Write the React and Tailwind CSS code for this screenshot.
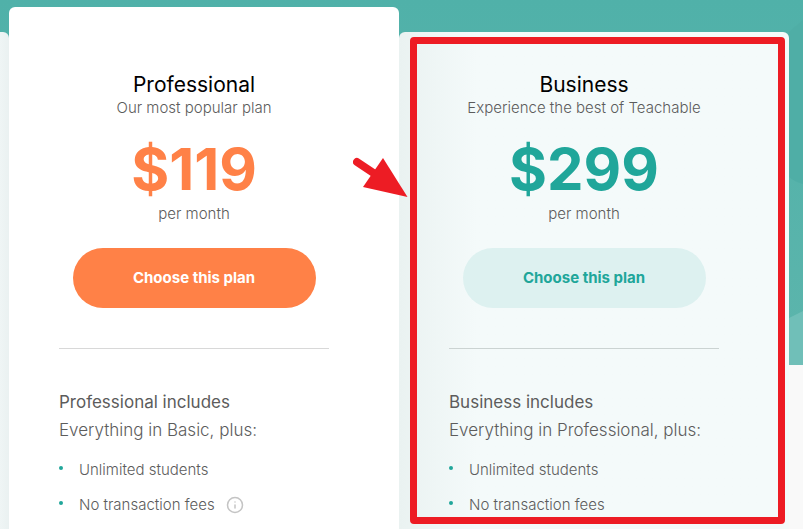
import { Info } from 'lucide-react';

const plans = [
  {
    name: 'Professional',
    tagline: 'Our most popular plan',
    price: '$119',
    heading: 'Professional includes',
    subheading: 'Everything in Basic, plus:',
    features: [
      { label: 'Unlimited students' },
      { label: 'No transaction fees', info: true }
    ],
    card: 'mt-[7px] pt-[66px] bg-white',
    priceColor: 'text-[#ff8147]',
    button: 'bg-[#ff8147] text-white',
    divider: 'border-[#d8d8d8]'
  },
  {
    name: 'Business',
    tagline: 'Experience the best of Teachable',
    price: '$299',
    heading: 'Business includes',
    subheading: 'Everything in Professional, plus:',
    features: [
      { label: 'Unlimited students' },
      { label: 'No transaction fees' }
    ],
    card: 'mt-[32px] pt-[41px] bg-[#f4fafa] bg-linear-to-r from-[#eaf2f1] to-[#f4fafa] to-20%',
    priceColor: 'text-[#20a69a]',
    button: 'bg-[#ddf1f0] text-[#20a69a]',
    divider: 'border-[#cbd3d2]',
    highlighted: true
  }
];

const HeroBackground = () => (
  <div className="absolute inset-x-0 top-0 h-[365px] overflow-hidden bg-linear-to-b from-[#50b1a9] to-[#5cb5ac]">
    <svg className="absolute right-0 top-0 h-full w-[14px]" viewBox="0 0 14 365" aria-hidden="true">
      <path d="M0 32L14 20V184Q6 182 0 177Z" fill="#4faea6" />
      <path d="M0 318L14 311V365H0Z" fill="#70bfb8" />
    </svg>
  </div>
);

const Arrow = () => (
  <svg
    className="absolute -left-[46px] top-[125px] h-[41px] w-[56px]"
    viewBox="0 0 56 41"
    fill="#ed1c24"
    aria-hidden="true"
  >
    <path d="M4 5L25 19" stroke="#ed1c24" strokeWidth="8" strokeLinecap="round" />
    <path d="M30 1L54.500 40L10 30Z" />
  </svg>
);

const PlanCard = ({ plan }) => (
  <section className={`relative rounded-t-md pl-[50px] pr-[70px] ${plan.card}`}>
    <div className="text-center">
      <h2 className="text-[21px] leading-6 text-black">{plan.name}</h2>
      <p className="text-[15px] leading-[22px] font-light whitespace-nowrap">{plan.tagline}</p>
      <p className={`mt-5 text-[58px] leading-[60px] font-bold ${plan.priceColor}`}>{plan.price}</p>
      <p className="mt-[5px] text-[15px] leading-5 font-light">per month</p>
      <button
        type="button"
        className={`mt-6 h-[60px] w-[90%] rounded-full text-[15px] font-bold ${plan.button}`}
      >
        Choose this plan
      </button>
    </div>

    <hr className={`mt-[40px] mb-[39px] ${plan.divider}`} />

    <h3 className="text-[17px] leading-7">{plan.heading}</h3>
    <p className="text-[17px] leading-7 font-light whitespace-nowrap">{plan.subheading}</p>
    <ul className="mt-[16px] flex flex-col gap-[15px]">
      {plan.features.map((feature) => (
        <li key={feature.label} className="flex items-center text-[15px] leading-5 font-light">
          <span className="mr-4 mb-[4px] size-1 rounded-full bg-[#20a69a]" />
          {feature.label}
          {feature.info && <Info className="ml-[11px] size-[18px] text-[#c4c4c4]" strokeWidth={2} />}
        </li>
      ))}
    </ul>

    {plan.highlighted && (
      <>
        <div className="absolute top-[5px] bottom-[5px] left-[11px] right-[4px] rounded-sm border-7 border-[#ed1c24] pointer-events-none" />
        <Arrow />
      </>
    )}
  </section>
);

const App = () => {
  return (
    <main className="relative min-h-screen bg-[#f9f9f9] font-['Inter',sans-serif] text-[#5c5c5c]">
      <HeroBackground />
      <div className="relative grid min-h-screen grid-cols-[9px_1fr_1fr] pr-[14px]">
        {/* Edge of the neighbouring plan */}
        <div className="mt-[32px] rounded-tr-md bg-linear-to-r from-[#eff5f5] to-[#eaf1f1]" />
        {plans.map((plan) => (
          <PlanCard key={plan.name} plan={plan} />
        ))}
      </div>
    </main>
  );
};

export default App;
